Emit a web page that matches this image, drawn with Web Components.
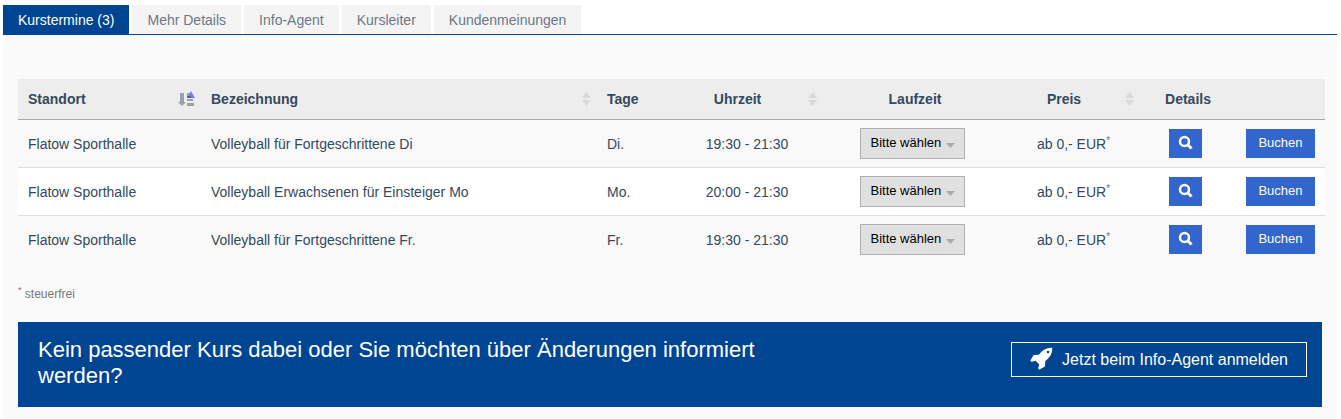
<!DOCTYPE html>
<html lang="de">
<head>
<meta charset="utf-8">
<meta name="viewport" content="width=device-width, initial-scale=1">
<title>Kurstermine</title>
<style>
  body {
    margin: 0;
    background: #fff;
    color: #34495e;
    font: 14px/20px "Liberation Sans", Arial, sans-serif;
    --brand: #004592;
    --action: #3366cc;
  }
</style>
</head>
<body>
<course-page>
  <course-tabs slot="tabs">
    <course-tab active href="#termine">Kurstermine (3)</course-tab>
    <course-tab href="#details">Mehr Details</course-tab>
    <course-tab href="#agent">Info-Agent</course-tab>
    <course-tab href="#leiter">Kursleiter</course-tab>
    <course-tab href="#meinungen">Kundenmeinungen</course-tab>
  </course-tabs>
  <course-table></course-table>
  <tax-note>steuerfrei</tax-note>
  <agent-banner>
    Kein passender Kurs dabei oder Sie möchten über Änderungen informiert werden?
    <agent-link slot="action" href="#anmelden">Jetzt beim Info-Agent anmelden</agent-link>
  </agent-banner>
</course-page>

<script>
class BaseElement extends HTMLElement {
  constructor() {
    super();
    this.attachShadow({ mode: 'open' });
  }
  connectedCallback() {
    this.shadowRoot.innerHTML = this.render();
  }
}

customElements.define('course-page', class extends BaseElement {
  render() {
    return `
      <style>
        :host { display: flex; flex-direction: column; min-height: 100vh; box-sizing: border-box; padding: 5px 4px 0 3px; }
        main { flex: 1; background: #fafafa; padding: 44px 12px 12px 15px; }
      </style>
      <slot name="tabs"></slot>
      <main><slot></slot></main>`;
  }
});

customElements.define('course-tabs', class extends BaseElement {
  render() {
    return `
      <style>
        :host { display: block; }
        nav { display: flex; gap: 3px; border-bottom: 1px solid var(--brand); }
      </style>
      <nav aria-label="Kursinformationen"><slot></slot></nav>`;
  }
});

customElements.define('course-tab', class extends BaseElement {
  render() {
    return `
      <style>
        :host { display: block; background: #f4f4f4; color: #6b7886; }
        :host([active]) { background: var(--brand); color: #fff; }
        a { display: block; padding: 5px 15px 4px; color: inherit; text-decoration: none; }
      </style>
      <a href="${this.getAttribute('href')}"><slot></slot></a>`;
  }
});

customElements.define('sort-icon', class extends BaseElement {
  render() {
    const sorted = this.hasAttribute('sorted');
    return `
      <style>
        :host { display: block; }
        svg { display: block; }
      </style>
      ${sorted
        ? `<svg width="17" height="16" viewBox="0 0 17 16">
             <path fill="#99a0aa" d="M2 2h4v9h2l-4 4-4-4h2z"/>
             <path fill="#99a0aa" d="M9 2h3v3H9zM9 8h6v2H9zM9 12h7v3H9z"/>
             <path fill="#7b7fe0" d="M13 0l4 7H9z"/>
             <path fill="#5a6090" d="M9 5h4v2H9z"/>
           </svg>`
        : `<svg width="9" height="16" viewBox="0 0 9 16">
             <path fill="#d9d9d9" d="M4.500 1L9 7H0zM0 9h9l-4.500 6z"/>
           </svg>`}`;
  }
});

customElements.define('duration-select', class extends BaseElement {
  render() {
    return `
      <style>
        :host { display: inline-grid; vertical-align: middle; margin-right: 6px; }
        select {
          grid-area: 1 / 1; appearance: none; box-sizing: border-box; width: 105px; height: 31px;
          margin: 0; padding: 0 20px 2px 10px; border: 1px solid #b0b0b0; border-radius: 0;
          background: #e0e0e0; color: #000; font: 13px/20px "Liberation Sans", Arial, sans-serif;
        }
        svg { grid-area: 1 / 1; place-self: center end; margin: 4px 10px 0 0; pointer-events: none; }
      </style>
      <select aria-label="Laufzeit"><option>Bitte wählen</option></select>
      <svg width="9" height="5" viewBox="0 0 9 5"><path fill="#aaa" d="M0 0h9L4.500 5z"/></svg>`;
  }
});

customElements.define('action-button', class extends BaseElement {
  render() {
    const search = this.hasAttribute('search');
    return `
      <style>
        :host { display: inline-block; vertical-align: middle; }
        button {
          display: flex; align-items: center; justify-content: center; box-sizing: border-box;
          width: 69px; height: 29px; margin: 0; padding: 0 0 2px; border: 0;
          background: var(--action); color: #fff; font: 13px/20px "Liberation Sans", Arial, sans-serif;
        }
        :host([search]) { margin-right: 6px; }
        :host([search]) button { width: 33px; }
        svg { display: block; }
      </style>
      ${search
        ? `<button type="button" aria-label="Details anzeigen">
             <svg width="15" height="15" viewBox="0 0 15 15" fill="none" stroke="#fff">
               <circle cx="6.500" cy="6.500" r="4.500" stroke-width="2.500"/>
               <path d="M10 10l3.500 3.500" stroke-width="3"/>
             </svg>
           </button>`
        : `<button type="button"><slot></slot></button>`}`;
  }
});

const COURSES = [
  { place: 'Flatow Sporthalle', name: 'Volleyball für Fortgeschrittene Di', day: 'Di.', time: '19:30 - 21:30', price: 'ab 0,- EUR' },
  { place: 'Flatow Sporthalle', name: 'Volleyball Erwachsenen für Einsteiger Mo', day: 'Mo.', time: '20:00 - 21:30', price: 'ab 0,- EUR' },
  { place: 'Flatow Sporthalle', name: 'Volleyball für Fortgeschrittene Fr.', day: 'Fr.', time: '19:30 - 21:30', price: 'ab 0,- EUR' }
];

customElements.define('course-table', class extends BaseElement {
  render() {
    const rows = COURSES.map(c => `
      <tr>
        <td>${c.place}</td>
        <td>${c.name}</td>
        <td>${c.day}</td>
        <td class="mid">${c.time}</td>
        <td class="mid"><duration-select></duration-select></td>
        <td class="mid">${c.price}<sup>*</sup></td>
        <td class="mid"><action-button search></action-button></td>
        <td><action-button>Buchen</action-button></td>
      </tr>`).join('');
    return `
      <style>
        :host { display: block; }
        table { width: 100%; table-layout: fixed; border-spacing: 0; font: inherit; color: inherit; }
        th, td { box-sizing: border-box; padding: 0 10px; text-align: left; vertical-align: middle; }
        th { height: 41px; background: #ededed; border-bottom: 1px solid #a9a9a9; }
        td { height: 48px; border-bottom: 1px solid #ddd; }
        tbody tr:nth-child(odd) { background: #f9f9f9; }
        tbody tr:nth-child(even) { background: #fff; }
        tbody tr:last-child td { border-bottom-color: transparent; }
        .mid { text-align: center; }
        .sort { padding-right: 6px; }
        .sort div { display: flex; align-items: center; gap: 14px; }
        .sort span { flex: 1; }
        sup { font-size: 10px; line-height: 0; vertical-align: 5px; color: #6b7886; }
        .place { width: 183px; } .day { width: 74px; } .time { width: 152px; } .duration { width: 184px; }
        .price { width: 133px; } .details { width: 96px; } .book { width: 89px; }
      </style>
      <table>
        <colgroup>
          <col class="place"><col><col class="day"><col class="time"><col class="duration">
          <col class="price"><col class="details"><col class="book">
        </colgroup>
        <thead>
          <tr>
            <th class="sort"><div><span>Standort</span><sort-icon sorted></sort-icon></div></th>
            <th class="sort"><div><span>Bezeichnung</span><sort-icon></sort-icon></div></th>
            <th>Tage</th>
            <th class="sort mid"><div><span>Uhrzeit</span><sort-icon></sort-icon></div></th>
            <th class="mid">Laufzeit</th>
            <th class="sort mid"><div><span>Preis</span><sort-icon></sort-icon></div></th>
            <th class="mid">Details</th>
            <th></th>
          </tr>
        </thead>
        <tbody>${rows}</tbody>
      </table>`;
  }
});

customElements.define('tax-note', class extends BaseElement {
  render() {
    return `
      <style>
        :host { display: block; color: #777; font-size: 12px; line-height: 20px; margin: 20px 0 18px; }
        sup { font-size: 9px; line-height: 0; vertical-align: 5px; }
      </style>
      <sup>*</sup> <slot></slot>`;
  }
});

customElements.define('agent-banner', class extends BaseElement {
  render() {
    return `
      <style>
        :host {
          display: flex; justify-content: space-between; align-items: flex-start; gap: 20px;
          margin-right: 3px; padding: 15px 15px 18px 20px; background: var(--brand); color: #fff;
        }
        p { margin: 0; max-width: 760px; font-size: 22px; line-height: 26px; }
        slot[name] { display: block; padding-top: 5px; }
      </style>
      <p><slot></slot></p>
      <slot name="action"></slot>`;
  }
});

customElements.define('agent-link', class extends BaseElement {
  render() {
    return `
      <style>
        :host { display: block; }
        a {
          display: flex; align-items: center; gap: 8px; box-sizing: border-box; height: 35px; padding: 0 18px;
          border: 1px solid #fff; color: #fff; font-size: 16px; line-height: 20px; text-decoration: none; white-space: nowrap;
        }
        svg { display: block; margin-bottom: 4px; }
      </style>
      <a href="${this.getAttribute('href')}">
        <svg width="24" height="24" viewBox="0 0 1792 1792"><path fill="#fff" d="M1440 448q0-40-28-68t-68-28-68 28-28 68 28 68 68 28 68-28 28-68zm224-288q0 249-75.500 430.500t-253.500 360.500q-81 80-195 176l-20 379q-2 16-16 26l-384 224q-7 4-16 4-12 0-23-9l-64-64q-13-14-8-32l85-276-281-281-276 85q-3 1-9 1-14 0-23-9l-64-64q-17-19-5-39l224-384q10-14 26-16l379-20q96-114 176-195 188-187 358-258t431-71q14 0 24 9.500t10 22.500z"/></svg>
        <slot></slot>
      </a>`;
  }
});
</script>
</body>
</html>
